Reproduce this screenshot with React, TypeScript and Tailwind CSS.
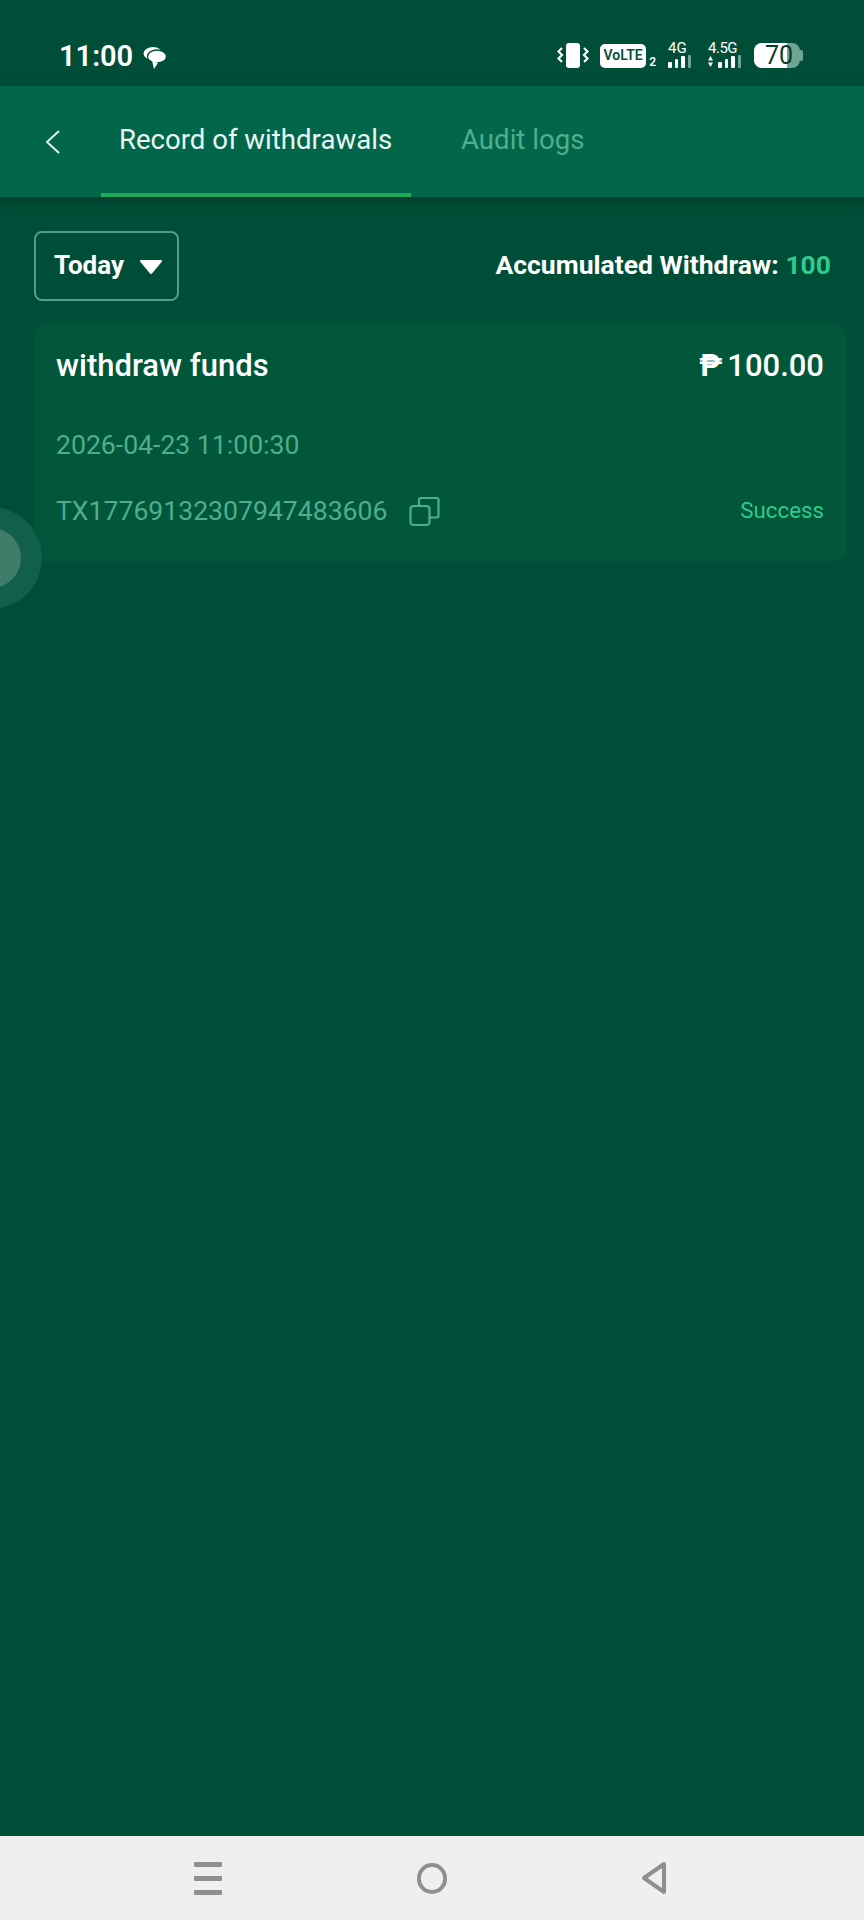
import React from "react";

function Bars({ arrows = false }: { arrows?: boolean }) {
  const hs = [6, 9, 12, 13];
  return (
    <div className="flex items-end h-[13px]">
      {arrows && (
        <svg width="5" height="13" viewBox="0 0 5 13" className="mr-[5px]">
          <path d="M2.500 1 5 5.500H0zM2.500 12 0 7.500h5z" fill="#fff" />
        </svg>
      )}
      <div className="flex items-end gap-[3px]">
        {hs.map((h, i) => (
          <div
            key={i}
            className={i < 3 ? "w-[3.500px] rounded-[1px] bg-white" : "w-[3.500px] rounded-[1px] bg-[#6fa595]"}
            style={{ height: h }}
          />
        ))}
      </div>
    </div>
  );
}

function StatusBar() {
  return (
    <div className="h-[86px] flex items-start pt-[43px] pl-[59px] pr-[61px] justify-between bg-[#004e37]">
      <div className="flex items-center gap-[10px] h-[26px]">
        <span className="text-[29px] leading-[26px] font-semibold text-white">11:00</span>
        <svg width="24" height="24" viewBox="0 0 24 24" className="mt-[3px]">
          <ellipse cx="10" cy="7.500" rx="9.500" ry="6.500" fill="#fff" />
          <ellipse cx="14" cy="10.500" rx="9.500" ry="6.500" fill="#fff" stroke="#004e37" strokeWidth="1.300" />
          <path d="M9 14.500 11 23l4-6z" fill="#fff" />
        </svg>
      </div>
      <div className="flex items-center h-[25px]">
        <svg width="32" height="25" viewBox="0 0 32 25" fill="none">
          <rect x="9" y="0" width="14" height="25" rx="3" fill="#fff" />
          <path d="M5 5 1.500 8.500 5 12l-3.500 3.500L5 19" stroke="#fff" strokeWidth="2.200" />
          <path d="M27 5l3.500 3.500L27 12l3.500 3.500L27 19" stroke="#fff" strokeWidth="2.200" />
        </svg>
        <div className="ml-[11px] w-[46px] h-[24px] rounded-[5px] bg-white flex items-center justify-center text-[14px] font-semibold text-[#034f3a]">
          VoLTE
        </div>
        <span className="ml-[3px] self-end text-[12px] leading-[12px] font-semibold text-white">2</span>
        <div className="ml-[12px] w-[26px] flex flex-col items-start">
          <span className="text-[15px] leading-[11px] mb-[1px] text-white">4G</span>
          <Bars />
        </div>
        <div className="ml-[14px] w-[33px] flex flex-col items-start">
          <span className="text-[15px] leading-[11px] mb-[1px] text-white tracking-[-0.5px]">4.5G</span>
          <Bars arrows />
        </div>
        <div className="ml-[13px] relative w-[46px] h-[25px] rounded-[8px] bg-[#6fa595] flex">
          <div className="w-[33px] h-full rounded-l-[8px] bg-white" />
          <span className="absolute left-[11px] top-0 text-[25px] leading-[25px] text-[#0d3a2d]">70</span>
        </div>
        <div className="w-[3px] h-[11px] rounded-r-[2px] bg-[#6fa595]" />
      </div>
    </div>
  );
}

function Header() {
  return (
    <div className="relative z-10 h-[111px] flex bg-[#02674a] shadow-[0_4px_10px_rgba(0,30,20,0.35)]">
      <div className="w-[101px] flex items-center pl-[45px]">
        <svg width="15" height="26" viewBox="0 0 15 26" fill="none">
          <path d="M14 2 2 13l12 11" stroke="#e4f3ee" strokeWidth="2" />
        </svg>
      </div>
      <div className="w-[310px] flex items-center justify-center border-b-[4px] border-[#1fab5a] text-[27.600px] text-[#eaf6f2] pr-[1px]">
        Record of withdrawals
      </div>
      <div className="ml-[50px] flex items-center text-[27.600px] text-[#4fae8c] pb-[3px]">Audit logs</div>
    </div>
  );
}

function CopyIcon() {
  return (
    <svg width="31" height="31" viewBox="0 0 31 31" fill="none" stroke="#4fae8c" strokeWidth="2.200">
      <rect x="1.500" y="10" width="19" height="19" rx="3" />
      <path d="M10 10V4a2 2 0 0 1 2-2h15.500a2 2 0 0 1 2 2v15.500a2 2 0 0 1-2 2H21" />
    </svg>
  );
}

export default function App() {
  return (
    <div
      className="relative w-[864px] h-[1920px] overflow-hidden flex flex-col bg-[#004e37]"
      style={{ fontFamily: "Roboto, sans-serif" }}
    >
      <StatusBar />
      <Header />
      <main className="flex-1 pt-[34px] pl-[34px] pr-[17px]">
        <div className="flex items-center justify-between pr-[16px] h-[70px]">
          <div className="w-[145px] h-[70px] rounded-[8px] border-2 border-[#4f9f85] flex items-center pl-[18px] pb-[2px]">
            <span className="text-[26px] font-bold text-white">Today</span>
            <svg width="24" height="16" viewBox="0 0 24 16" className="ml-[15px] mt-[3px]">
              <path d="M2 2h20L12 14z" fill="#fff" stroke="#fff" strokeWidth="2" strokeLinejoin="round" />
            </svg>
          </div>
          <div className="text-[26.500px] font-bold text-white pb-[2px]">
            Accumulated Withdraw: <span className="text-[#2ecb8c]">100</span>
          </div>
        </div>
        <div className="mt-[23px] h-[237px] rounded-[14px] bg-[#02573b] px-[22px] pt-[22px]">
          <div className="flex items-center justify-between pr-[1px] h-[40px]">
            <span className="text-[31px] font-medium text-white">withdraw funds</span>
            <span className="flex items-center gap-[5px] text-[31px] text-white">
              <span className="font-bold">₱</span>
              <span className="font-medium">100.00</span>
            </span>
          </div>
          <div className="mt-[39px] text-[26.600px] leading-[40px] text-[#4fae8c]">2026-04-23 11:00:30</div>
          <div className="mt-[26px] flex items-center justify-between pr-[1px]">
            <div className="flex items-center gap-[22px]">
              <span className="text-[26.600px] leading-[40px] text-[#4fae8c]">TX17769132307947483606</span>
              <CopyIcon />
            </div>
            <span className="text-[22.300px] text-[#2ecb8c]">Success</span>
          </div>
        </div>
      </main>
      <footer className="h-[84px] bg-[#efefef] flex items-center">
        <div className="ml-[194px] flex flex-col gap-[9px]">
          <div className="w-[28px] h-[5px] rounded-[1px] bg-[#8f8f8f]" />
          <div className="w-[28px] h-[5px] rounded-[1px] bg-[#8f8f8f]" />
          <div className="w-[28px] h-[5px] rounded-[1px] bg-[#8f8f8f]" />
        </div>
        <div className="ml-[195px] w-[30px] h-[31px] rounded-full border-[4px] border-[#8f8f8f]" />
        <svg width="26" height="34" viewBox="0 0 26 34" fill="none" className="ml-[194px]">
          <path d="M23 3v28L3 17z" stroke="#8f8f8f" strokeWidth="4" strokeLinejoin="round" />
        </svg>
      </footer>
      <div className="absolute left-[-60px] top-[507px] w-[102px] h-[102px] rounded-full bg-[#12604b] flex items-center justify-center">
        <div className="w-[60px] h-[60px] rounded-full bg-[#3f7c6a]" />
      </div>
    </div>
  );
}
